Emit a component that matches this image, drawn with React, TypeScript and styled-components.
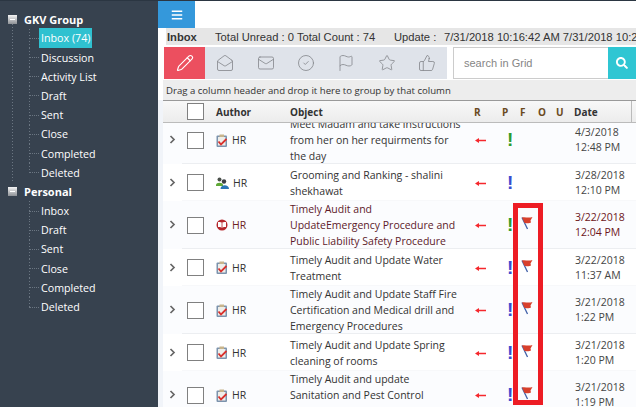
import { FaBars, FaSearch } from "react-icons/fa";
import { CircleCheck, Flag, Mail, MailOpen, Pencil, Star, ThumbsUp } from "lucide-react";
import styled, { createGlobalStyle } from "styled-components";

const GlobalStyle = createGlobalStyle`
  html, body {
    margin: 0;
    height: 100%;
    background: #fff;
    overflow: hidden;
  }
  * { box-sizing: border-box; }
`;

const Page = styled.div`
  position: relative;
  display: flex;
  width: 636px;
  height: 407px;
  overflow: hidden;
  border-top: 1px solid #2b3642;
  font-family: "Open Sans", "Liberation Sans", sans-serif;
`;

const Sidebar = styled.nav`
  flex: none;
  width: 158px;
  padding-top: 8.6px;
  background: #37424f;
  color: #fff;
  font-size: 10.7px;
`;

const Group = styled.section<{ $linked?: boolean }>`
  padding-left: 8px;
  background: ${(p) =>
    p.$linked
      ? "repeating-linear-gradient(#6b7682 0 1px, transparent 1px 3px) 12px 14px / 1px 100% no-repeat"
      : "none"};
`;

const GroupHead = styled.div`
  display: flex;
  align-items: center;
  gap: 7px;
  height: 19.2px;
  font-size: 11px;
  font-weight: 700;
`;

const Toggle = styled.span`
  position: relative;
  flex: none;
  width: 9px;
  height: 9px;
  background: linear-gradient(#f4f4f4, #8d9196);

  &::after {
    content: "";
    position: absolute;
    left: 2px;
    right: 2px;
    top: 4px;
    height: 1px;
    background: #fff;
  }
`;

const Items = styled.ul`
  list-style: none;
  margin: 0 0 0 21px;
  padding: 0;
`;

const dots = "repeating-linear-gradient(#6b7682 0 1px, transparent 1px 3px)";

const Item = styled.li<{ $last?: boolean }>`
  display: flex;
  align-items: center;
  height: 19.2px;
  background: ${dots} 0 0 / 1px ${(p) => (p.$last ? "50%" : "100%")} no-repeat;
`;

const Connector = styled.span`
  flex: none;
  width: 10px;
  margin-right: 2px;
  border-top: 1px dotted #6b7682;
`;

const ItemLabel = styled.span<{ $active?: boolean }>`
  padding: 3px 2px;
  margin-left: -2px;
  background: ${(p) => (p.$active ? "#2fc1d0" : "transparent")};
  white-space: nowrap;
`;

const Main = styled.main`
  flex: 1;
  min-width: 0;
  display: flex;
  flex-direction: column;
`;

const TopBar = styled.div`
  flex: none;
  height: 27px;
`;

const MenuButton = styled.button`
  display: flex;
  align-items: center;
  justify-content: center;
  width: 37px;
  height: 27px;
  padding: 0;
  border: 0;
  background: #3498db;
  color: #fff;
  font-size: 12px;
`;

const InfoBar = styled.div`
  flex: none;
  display: flex;
  height: 17px;
  margin-left: 8px;
  padding-left: 1px;
  align-items: center;
  background: #e6e6e6;
  color: #333;
  font-family: "Liberation Sans", Arial, sans-serif;
  font-size: 11.2px;
  white-space: nowrap;
  overflow: hidden;
`;

const InfoTitle = styled.strong`
  width: 48px;
  flex: none;
`;

const InfoCount = styled.span`
  width: 179px;
  flex: none;
`;

const InfoUpdate = styled.span`
  width: 50px;
  flex: none;
`;

const Toolbar = styled.div`
  flex: none;
  display: flex;
  height: 32px;
  margin: 2px 0 1px 6px;
`;

const Actions = styled.div`
  flex: none;
  display: flex;
  width: 283px;
  background: #dfe3ea;
`;

const ActionButton = styled.button<{ $primary?: boolean }>`
  flex: none;
  display: flex;
  align-items: center;
  justify-content: center;
  width: ${(p) => (p.$primary ? "41px" : "40.4px")};
  padding: 0;
  border: 0;
  background: ${(p) => (p.$primary ? "#ec4f5f" : "transparent")};
  color: ${(p) => (p.$primary ? "#fff" : "#85888d")};
`;

const Search = styled.div`
  flex: 1;
  min-width: 0;
  display: flex;
  margin-left: 6px;
`;

const SearchInput = styled.input`
  flex: 1;
  min-width: 0;
  width: 0;
  padding: 0 10px;
  border: 1px solid #ccc;
  border-right: 0;
  outline: none;
  font-family: "Liberation Sans", Arial, sans-serif;
  font-size: 11px;

  &::placeholder {
    color: #858585;
    opacity: 1;
  }
`;

const SearchButton = styled.button`
  flex: none;
  display: flex;
  align-items: center;
  justify-content: center;
  width: 28px;
  padding: 0;
  border: 0;
  background: #2fc6d3;
  color: #fff;
  font-size: 12px;
`;

const GroupBar = styled.div`
  flex: none;
  display: flex;
  align-items: center;
  height: 20px;
  margin-left: 5px;
  padding-left: 3px;
  background: #ededed;
  color: #333;
  font-size: 9.6px;
  white-space: nowrap;
`;

const Grid = styled.div`
  flex: 1;
  min-height: 0;
  display: flex;
  flex-direction: column;
  margin-left: 5px;
  box-shadow: -5px 0 0 #f1f4f9;
`;

const columns = "24px 29px 74px 184px 28px 18px 18px 18px 18px 1fr";

const HeadRow = styled.div`
  flex: none;
  display: grid;
  grid-template-columns: ${columns};
  align-items: center;
  height: 23px;
  border-top: 1px solid #999;
  border-bottom: 1px solid #bbb;
  background: linear-gradient(#f8f8f8, #ececec);
  color: #333;
  font-size: 10px;
  font-weight: 700;
`;

const HeadAccent = styled.span`
  color: #6b4a1e;
`;

const HeadDate = styled.span`
  align-self: stretch;
  display: flex;
  align-items: center;
  margin-right: 4px;
  border-right: 1px solid #bbb;
`;

const Check = styled.span`
  display: block;
  width: 17px;
  height: 17px;
  border: 1px solid #808080;
  background: #fff;
`;

const RowList = styled.div`
  flex: 1;
  min-height: 0;
  overflow: hidden;
  background: #fbfcfe;
`;

const Rows = styled.div`
  margin-top: -7px;
`;

const Row = styled.div<{ $tall?: boolean }>`
  position: relative;
  display: grid;
  grid-template-columns: ${columns};
  align-items: center;
  height: ${(p) => (p.$tall ? "48px" : "37px")};
  background: ${(p) => (p.$tall ? "#fbfcfe" : "#fff")};
  color: #333;
  font-size: 10.5px;
  line-height: 16px;

  &::after {
    content: "";
    position: absolute;
    left: 19px;
    right: 0;
    bottom: 0;
    height: 1px;
    background: ${(p) => (p.$tall ? "#eceef1" : "#f7f8fa")};
  }
`;

const Expander = styled.span`
  padding-left: 6px;
  color: #666;
`;

const Author = styled.span<{ $alert?: boolean }>`
  display: flex;
  align-items: center;
  gap: 4px;
  color: ${(p) => (p.$alert ? "#6d1f24" : "#333")};
`;

const ObjectText = styled.span<{ $alert?: boolean }>`
  padding-right: 12.5px;
  color: ${(p) => (p.$alert ? "#5d1a2a" : "#333")};
`;

const ArrowCell = styled.span`
  padding-left: 1px;
`;

const DateText = styled.span<{ $alert?: boolean }>`
  line-height: 15px;
  padding-left: 1px;
  color: ${(p) => (p.$alert ? "#6d1520" : "#444")};
`;

const Mark = styled.span<{ $tone: "green" | "blue" }>`
  padding-left: 5px;
  color: ${(p) => (p.$tone === "green" ? "#2e9b2e" : "#3a4ccf")};
  font-family: "Liberation Sans", Arial, sans-serif;
  font-size: 19px;
  font-weight: 700;
`;

const FlagCell = styled.span`
  padding-left: 1px;
`;

const Highlight = styled.div`
  position: absolute;
  left: 513px;
  top: 202px;
  width: 30px;
  height: 202px;
  border: 5px solid #ed1c24;
  pointer-events: none;
`;

function Chevron() {
  return (
    <svg width="7" height="9" viewBox="0 0 7 9" fill="none" stroke="#666" strokeWidth="1.7">
      <path d="M1.5 1 5 4.5 1.5 8" />
    </svg>
  );
}

function ArrowLeft() {
  return (
    <svg width="11" height="7" viewBox="0 0 11 7">
      <path d="M0 3.5 4 1v1.7h7v1.6H4V6z" fill="#f5282d" />
    </svg>
  );
}

function FlagMark() {
  return (
    <svg width="12" height="14" viewBox="0 0 12 14">
      <path d="M1 1.500 6.500 13" stroke="#3f5fa8" strokeWidth="1.300" />
      <path d="M1 1.500C4 .5 7 2.500 11.500 1 L9.500 4.500 10 6.500C7.500 8 5 6.500 3.500 7z" fill="#d8402c" />
    </svg>
  );
}

function ClipboardIcon() {
  return (
    <svg width="12" height="13" viewBox="0 0 12 13">
      <rect x="0.500" y="1.500" width="10.500" height="11.500" rx="1" fill="#7c93ad" />
      <rect x="2" y="3" width="7.500" height="8.500" fill="#eeeeea" />
      <rect x="3.500" y="0.500" width="4.500" height="2.500" fill="#c8b48c" />
      <path d="M2.500 7.500 5 10.500 10.500 5" fill="none" stroke="#d9302c" strokeWidth="1.800" />
    </svg>
  );
}

function PeopleIcon() {
  return (
    <svg width="13" height="12" viewBox="0 0 13 12">
      <circle cx="3.500" cy="2.500" r="2" fill="#4a4f4a" />
      <path d="M0 8c0-3 7-3 7 0v1H0z" fill="#5fa836" />
      <circle cx="8" cy="4.500" r="2.200" fill="#3c3f45" />
      <path d="M4.500 12c0-5 8.500-5 8.500 0z" fill="#2a76b8" />
    </svg>
  );
}

function BookIcon() {
  return (
    <svg width="12" height="12" viewBox="0 0 12 12">
      <circle cx="6" cy="6" r="5.500" fill="#b5272c" />
      <path d="M2 3C3.800 2.800 5.200 3.200 6 4 6.800 3.200 8.200 2.800 10 3v5C8.200 7.800 6.800 8.200 6 9 5.200 8.200 3.800 7.800 2 8z" fill="#fff" />
      <path d="M6 4v5" stroke="#b5272c" strokeWidth="0.800" />
    </svg>
  );
}

type Message = {
  icon: "clipboard" | "people" | "book";
  object: string;
  mark: "green" | "blue";
  flagged?: boolean;
  date: string;
  time: string;
  alert?: boolean;
};

const messages: Message[] = [
  { icon: "clipboard", object: "Meet Madam and take instructions from her on her requirments for the day", mark: "green", date: "4/3/2018", time: "12:48 PM" },
  { icon: "people", object: "Grooming and Ranking - shalini shekhawat", mark: "blue", date: "3/28/2018", time: "12:10 PM" },
  { icon: "book", object: "Timely Audit and UpdateEmergency Procedure and Public Liability Safety Procedure", mark: "green", flagged: true, date: "3/22/2018", time: "12:04 PM", alert: true },
  { icon: "clipboard", object: "Timely Audit and Update Water Treatment", mark: "blue", flagged: true, date: "3/22/2018", time: "11:37 AM" },
  { icon: "clipboard", object: "Timely Audit and Update Staff Fire Certification and Medical drill and Emergency Procedures", mark: "blue", flagged: true, date: "3/21/2018", time: "1:22 PM" },
  { icon: "clipboard", object: "Timely Audit and Update Spring cleaning of rooms", mark: "blue", flagged: true, date: "3/21/2018", time: "1:20 PM" },
  { icon: "clipboard", object: "Timely Audit and update Sanitation and Pest Control Checklist", mark: "blue", flagged: true, date: "3/21/2018", time: "1:19 PM" },
];

const rowIcons = {
  clipboard: <ClipboardIcon />,
  people: <PeopleIcon />,
  book: <BookIcon />,
};

const gkvItems = ["Discussion", "Activity List", "Draft", "Sent", "Close", "Completed", "Deleted"];
const personalItems = ["Inbox", "Draft", "Sent", "Close", "Completed", "Deleted"];
const actionIcons = [MailOpen, Mail, CircleCheck, Flag, Star, ThumbsUp];

export default function App() {
  return (
    <Page>
      <GlobalStyle />
      <Sidebar>
        <Group $linked>
          <GroupHead>
            <Toggle />
            GKV Group
          </GroupHead>
          <Items>
            <Item>
              <Connector />
              <ItemLabel $active>Inbox (74)</ItemLabel>
            </Item>
            {gkvItems.map((name, i) => (
              <Item key={name} $last={i === gkvItems.length - 1}>
                <Connector />
                <ItemLabel>{name}</ItemLabel>
              </Item>
            ))}
          </Items>
        </Group>
        <Group>
          <GroupHead>
            <Toggle />
            Personal
          </GroupHead>
          <Items>
            {personalItems.map((name, i) => (
              <Item key={name} $last={i === personalItems.length - 1}>
                <Connector />
                <ItemLabel>{name}</ItemLabel>
              </Item>
            ))}
          </Items>
        </Group>
      </Sidebar>

      <Main>
        <TopBar>
          <MenuButton aria-label="Menu">
            <FaBars />
          </MenuButton>
        </TopBar>
        <InfoBar>
          <InfoTitle>Inbox</InfoTitle>
          <InfoCount>Total Unread : 0 Total Count : 74</InfoCount>
          <InfoUpdate>Update :</InfoUpdate>
          <span>7/31/2018 10:16:42 AM 7/31/2018 10:20:42 AM</span>
        </InfoBar>
        <Toolbar>
          <Actions>
            <ActionButton $primary aria-label="Compose">
              <Pencil size={18} strokeWidth={1.5} />
            </ActionButton>
            {actionIcons.map((Icon, i) => (
              <ActionButton key={i}>
                <Icon size={18} strokeWidth={1.1} />
              </ActionButton>
            ))}
          </Actions>
          <Search>
            <SearchInput placeholder="search in Grid" />
            <SearchButton aria-label="Search">
              <FaSearch />
            </SearchButton>
          </Search>
        </Toolbar>
        <GroupBar>Drag a column header and drop it here to group by that column</GroupBar>
        <Grid>
          <HeadRow>
            <span />
            <Check />
            <span>Author</span>
            <span>Object</span>
            <HeadAccent>R</HeadAccent>
            <HeadAccent>P</HeadAccent>
            <HeadAccent>F</HeadAccent>
            <HeadAccent>O</HeadAccent>
            <HeadAccent>U</HeadAccent>
            <HeadDate>Date</HeadDate>
          </HeadRow>
          <RowList>
            <Rows>
              {messages.map((m, i) => (
                <Row key={i} $tall={i % 2 === 0}>
                  <Expander>
                    <Chevron />
                  </Expander>
                  <Check />
                  <Author $alert={m.alert}>
                    {rowIcons[m.icon]}
                    HR
                  </Author>
                  <ObjectText $alert={m.alert}>{m.object}</ObjectText>
                  <ArrowCell>
                    <ArrowLeft />
                  </ArrowCell>
                  <Mark $tone={m.mark}>!</Mark>
                  <FlagCell>{m.flagged && <FlagMark />}</FlagCell>
                  <span />
                  <span />
                  <DateText $alert={m.alert}>
                    {m.date}
                    <br />
                    {m.time}
                  </DateText>
                </Row>
              ))}
            </Rows>
          </RowList>
        </Grid>
      </Main>
      <Highlight />
    </Page>
  );
}
